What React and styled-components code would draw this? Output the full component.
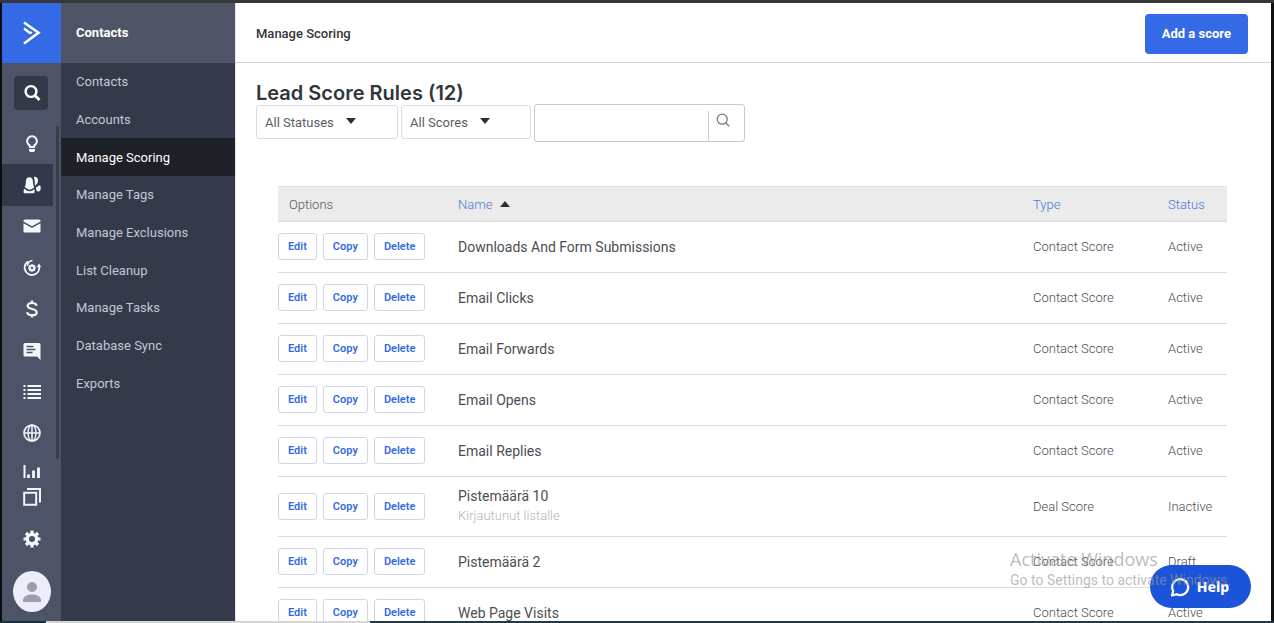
import React from "react";
import styled, { createGlobalStyle } from "styled-components";

const GlobalStyle = createGlobalStyle`
  *, *::before, *::after { box-sizing: border-box; }
  body {
    margin: 0;
    background: #fff;
    color: #32353b;
    font-family: "Roboto", "Inter", sans-serif;
    font-size: 13px;
  }
  button, input, select { font: inherit; color: inherit; }
  h1, h2, p, ul { margin: 0; padding: 0; }
  ul { list-style: none; }
  a { color: inherit; text-decoration: none; }
`;

const Screen = styled.div`
  position: relative;
  display: flex;
  flex-direction: column;
  height: 100vh;
  overflow: hidden;
  border-top: 3px solid #37363a;
`;

const Shell = styled.div`
  display: flex;
  flex: 1;
  min-height: 0;
  border-left: 2px solid #0b0c10;
  border-right: 3px solid #101113;
`;

const Taskbar = styled.div`
  display: flex;
  flex: none;
  height: 2px;
  background: #233744;
`;
const TaskbarStart = styled.span`
  width: 46px;
  background: #1c2d3d;
`;
const TaskbarSearch = styled.span`
  width: 324px;
  background: #d5d5d5;
`;

const Rail = styled.nav`
  position: relative;
  display: flex;
  flex: none;
  flex-direction: column;
  width: 59px;
  background: #4d5468;
  color: #f5f6fc;
`;
const Logo = styled.a`
  display: flex;
  flex: none;
  align-items: center;
  justify-content: center;
  height: 60px;
  background: #356ae6;
`;
const RailSearch = styled.button`
  display: flex;
  flex: none;
  align-items: center;
  justify-content: center;
  width: 34px;
  height: 34px;
  margin: 13px 12px;
  padding: 0 0 0 2px;
  border: 0;
  border-radius: 4px;
  background: #333949;
  color: #fff;
`;
const RailList = styled.ul`
  display: flex;
  flex: 1;
  flex-direction: column;
  min-height: 0;
`;
const RailItem = styled.li`
  display: flex;
  flex: 1;
  width: 51px;
  background: ${(p) => (p.$active ? "#333949" : "transparent")};
`;
const RailLink = styled.a`
  display: flex;
  flex: 1;
  align-items: center;
  justify-content: center;
  padding-left: 9px;
`;
const RailFoot = styled.a`
  display: flex;
  flex: none;
  align-items: flex-end;
  justify-content: center;
  height: ${(p) => p.$height}px;
`;
const RailThumb = styled.span`
  position: absolute;
  top: 123px;
  right: 2px;
  bottom: 162px;
  width: 3px;
  border-radius: 2px;
  background: #363c4c;
`;
const Avatar = styled.a`
  display: flex;
  flex: none;
  align-items: center;
  justify-content: center;
  width: 38px;
  height: 41px;
  margin: 23px 11px 9px;
  border-radius: 50%;
  background: #ebedf8;
  color: #9a9fb3;
`;

const Menu = styled.nav`
  flex: none;
  width: 174px;
  background: #343a4a;
  color: #c3c7d6;
`;
const MenuTitle = styled.h2`
  padding-left: 15px;
  background: #4f5567;
  color: #fff;
  font-size: 13px;
  font-weight: 700;
  line-height: 60px;
`;
const MenuList = styled.ul`
  display: grid;
  grid-auto-rows: 1fr;
  height: 339px;
`;
const MenuLink = styled.a`
  display: flex;
  align-items: center;
  height: 100%;
  padding-left: 15px;
  background: ${(p) => (p.$active ? "#1e2128" : "transparent")};
  color: ${(p) => (p.$active ? "#fff" : "inherit")};
`;

const Main = styled.main`
  flex: 1;
  min-width: 0;
  overflow: hidden;
  border-left: 1px solid #e3e4ea;
`;
const Header = styled.header`
  display: flex;
  align-items: center;
  justify-content: space-between;
  height: 60px;
  padding: 2px 23px 0 20px;
  border-bottom: 1px solid #cfd3e6;
`;
const Crumb = styled.p`
  font-weight: 500;
`;
const AddButton = styled.button`
  height: 40px;
  padding: 0 17px;
  border: 0;
  border-radius: 4px;
  background: #356ae6;
  color: #fff;
  font-weight: 700;
`;
const Title = styled.h1`
  padding: 20px 20px 0;
  font-family: "Inter", "Roboto", sans-serif;
  font-size: 20px;
  font-weight: 600;
  line-height: 21px;
`;
const Filters = styled.form`
  display: flex;
  align-items: flex-start;
  gap: 3px;
  padding: 0 20px;
`;
const SelectBox = styled.span`
  position: relative;
  display: flex;
  width: ${(p) => p.$width}px;
  height: 34px;
  margin-top: 1px;
`;
const Select = styled.select`
  width: 100%;
  padding: 0 8px;
  border: 1px solid #dadce3;
  border-radius: 3px;
  background: #fff;
  color: #5b5e66;
  appearance: none;
`;
const SelectArrow = styled.svg`
  position: absolute;
  top: 13px;
  left: ${(p) => p.$left}px;
  pointer-events: none;
`;
const SearchBox = styled.span`
  display: flex;
  align-items: flex-end;
  width: 211px;
  height: 38px;
  border: 1px solid #c9c9cb;
  border-radius: 3px;
`;
const SearchInput = styled.input`
  flex: 1;
  min-width: 0;
  height: 36px;
  padding: 0 8px;
  border: 0;
  outline: 0;
  background: transparent;
`;
const SearchButton = styled.button`
  display: flex;
  width: 36px;
  height: 30px;
  padding: 2px 0 0 7px;
  border: 0;
  border-left: 1px solid #cfcfd1;
  background: transparent;
  color: #77797d;
`;

const TableWrap = styled.div`
  padding: 44px 44px 0 42px;
`;
const Table = styled.table`
  width: 100%;
  border-collapse: separate;
  border-spacing: 0;
  table-layout: fixed;
`;
const HeadCell = styled.th`
  width: ${(p) => p.$width};
  height: 36px;
  padding: 0 0 0 ${(p) => p.$indent || 0}px;
  border-top: 1px solid #e2e2e2;
  border-bottom: 1px solid #d9d9d9;
  background: #ebebeb;
  color: #55575c;
  font-weight: 300;
  text-align: left;
`;
const SortLink = styled.a`
  display: inline-flex;
  align-items: center;
  gap: 8px;
  color: #4a78dc;
`;
const Cell = styled.td`
  height: ${(p) => (p.$tall ? 60 : 51)}px;
  padding: 0 0 1px;
  border-bottom: 1px solid #dcdcde;
  color: #4c4e53;
  font-weight: 300;
  white-space: nowrap;
`;
const Actions = styled.div`
  display: flex;
  gap: 6px;
`;
const RowButton = styled.button`
  height: 27px;
  padding: 0 9px;
  border: 1px solid #d0d5e6;
  border-radius: 3px;
  background: #fff;
  color: #356ae6;
  font-size: 11px;
  font-weight: 600;
`;
const RuleName = styled.p`
  color: #4c4e53;
  font-size: 14px;
  font-weight: 400;
  line-height: 20px;
`;
const RuleNote = styled.p`
  color: #b4b5b9;
  line-height: 20px;
`;

const HelpButton = styled.button`
  position: absolute;
  right: 23px;
  bottom: 15px;
  display: flex;
  align-items: center;
  justify-content: center;
  gap: 7px;
  width: 101px;
  height: 43px;
  padding: 0 2px 0 0;
  border: 0;
  border-radius: 22px;
  background: #1b54d9;
  color: #fff;
  font-family: "Noto Sans", sans-serif;
  font-size: 14px;
  font-weight: 800;
`;
const Watermark = styled.div`
  position: absolute;
  right: 43px;
  bottom: 34px;
  color: rgba(150, 150, 150, 0.65);
  font-size: 14px;
  line-height: 18px;
  pointer-events: none;
`;
const WatermarkTitle = styled.p`
  font-family: "Open Sans", "Noto Sans", sans-serif;
  font-size: 18px;
  line-height: 24px;
`;

const Icon = ({ size = 18, children }) => (
  <svg width={size} height={size} viewBox="0 0 18 18" fill="none" stroke="currentColor" strokeWidth="2" aria-hidden="true">
    {children}
  </svg>
);

const railItems = [
  ["Tips", <Icon><path d="M6.800 12v-1.500A4.900 4.900 0 1 1 11.200 10.500V12Z" /><path d="M6 14h6v1.200c0 1-.8 1.800-1.800 1.800H7.800C6.800 17 6 16.200 6 15.200Z" fill="currentColor" stroke="none" /></Icon>],
  ["Contacts", <Icon><g fill="currentColor" stroke="none"><path d="M6.400 1.200c2 0 3.100 1.200 3.400 3.200l.5 4.300c.1 1 .9 1.600 1 2.700-1 .2-1.700 1-2.500 1.600-1.600 1.200-3.300 1-4.700-.2-.8-.7-1.500-1.400-2.500-1.500.1-1 .9-1.600 1-2.600L3 4.400c.3-2 1.400-3.200 3.400-3.200Z" /><path d="M1 12.700c1 .1 1.500.8 2.300 1.500 2 1.500 4.600 1.500 6.600 0 .6-.5 1-.9 1.700-1V16a1.300 1.300 0 0 1-1.300 1.300H1.800A1.300 1.300 0 0 1 .5 16Z" /><path d="M10.800.9c2.500-.5 4 1 4.200 3.100.1 1.800-.2 3-1.200 4l-1.700 1.700c-.6-2.500-.1-6-1.300-8.800Z" /><path d="M13 11.500c1.500-.5 2.500-2.400 4.200-2.200.6 1.400.6 3.400.3 4.400-.4 1.200-1.300 1.800-2.400 1.800-1.600 0-2.200-1.700-2.100-4Z" /></g></Icon>],
  ["Campaigns", <Icon><path d="M1.500 2.500h15a1 1 0 0 1 1 1v1L9 9.300.5 4.500v-1a1 1 0 0 1 1-1ZM.5 6.200 9 11l8.500-4.800v8.300a1 1 0 0 1-1 1h-15a1 1 0 0 1-1-1Z" fill="currentColor" stroke="none" /></Icon>],
  ["Automations", <Icon><path d="M5 2.500A7.300 7.300 0 1 0 16.200 7.500" /><path d="M9.500 1.500C6 2 4.500 4 4.300 7" strokeWidth="1.700" /><path d="m13.500 8 2.700-3.500L18 8Z" fill="currentColor" stroke="none" /><circle cx="9" cy="9" r="2.300" strokeWidth="2.300" /><path d="M9 5v8M5 9h8M6.200 6.200l5.600 5.600M11.800 6.200l-5.600 5.600" strokeWidth="1" /><circle cx="9" cy="9" r="1.200" fill="#4d5468" stroke="none" /></Icon>],
  ["Deals", <Icon><path d="M13.600 5.700C13.300 3.900 11.600 3 9.100 3 6.500 3 4.700 4 4.700 5.800c0 2.100 2.100 2.700 4.400 3.200 2.500.5 4.600 1.200 4.600 3.400 0 1.800-1.900 2.800-4.600 2.800-2.800 0-4.700-1.100-4.900-3.100M9 .5v3M9 14.500v3" strokeWidth="2.200" /></Icon>],
  ["Conversations", <Icon><path d="M2 1h14a1.500 1.500 0 0 1 1.500 1.500V18L14 14.500H2A1.500 1.500 0 0 1 .5 13V2.500A1.500 1.500 0 0 1 2 1Z" fill="currentColor" stroke="none" /><path d="M3.500 4.500h7M3.500 7.500h9M3.500 10.500h6" stroke="#4d5468" strokeWidth="1.500" /></Icon>],
  ["Lists", <Icon><path d="M4.500 3h13.500M4.500 7h13.500M4.500 11h13.500M4.500 15h13.500M.5 3h2M.5 7h2M.5 11h2M.5 15h2" strokeWidth="2" /></Icon>],
  ["Website", <Icon><circle cx="9" cy="9" r="8" strokeWidth="1.600" /><ellipse cx="9" cy="9" rx="4" ry="8" strokeWidth="1.300" /><path d="M1 9h16M9 1v16" strokeWidth="1.500" /></Icon>],
];

const menuItems = [
  "Contacts", "Accounts", "Manage Scoring", "Manage Tags", "Manage Exclusions",
  "List Cleanup", "Manage Tasks", "Database Sync", "Exports",
];

const rules = [
  { name: "Downloads And Form Submissions", type: "Contact Score", status: "Active" },
  { name: "Email Clicks", type: "Contact Score", status: "Active" },
  { name: "Email Forwards", type: "Contact Score", status: "Active" },
  { name: "Email Opens", type: "Contact Score", status: "Active" },
  { name: "Email Replies", type: "Contact Score", status: "Active" },
  { name: "Pistemäärä 10", note: "Kirjautunut listalle", type: "Deal Score", status: "Inactive" },
  { name: "Pistemäärä 2", type: "Contact Score", status: "Draft" },
  { name: "Web Page Visits", type: "Contact Score", status: "Active" },
];

function Filter({ label, value, width, arrow }) {
  return (
    <SelectBox $width={width}>
      <Select aria-label={label} defaultValue={value}>
        <option>{value}</option>
      </Select>
      <SelectArrow $left={arrow} width="10" height="6" viewBox="0 0 10 6" aria-hidden="true">
        <path d="M0 0h10L5 6Z" fill="#2d2e31" />
      </SelectArrow>
    </SelectBox>
  );
}

function RuleRow({ rule }) {
  const tall = Boolean(rule.note);
  return (
    <tr>
      <Cell $tall={tall}>
        <Actions>
          <RowButton type="button">Edit</RowButton>
          <RowButton type="button">Copy</RowButton>
          <RowButton type="button">Delete</RowButton>
        </Actions>
      </Cell>
      <Cell $tall={tall}>
        <RuleName>{rule.name}</RuleName>
        {rule.note && <RuleNote>{rule.note}</RuleNote>}
      </Cell>
      <Cell $tall={tall}>{rule.type}</Cell>
      <Cell $tall={tall}>{rule.status}</Cell>
    </tr>
  );
}

export default function App() {
  return (
    <>
      <GlobalStyle />
      <Screen>
        <Shell>
          <Rail aria-label="Main">
            <Logo href="#" aria-label="Home">
              <svg width="18" height="24" viewBox="0 0 18 24" fill="none" stroke="#fff" strokeWidth="2.600" aria-hidden="true">
                <path d="M1 1.500 15.500 11.800 1 22.500" />
                <path d="M1 7.500 6.300 11.500Q7.500 12.300 9 11.200" strokeWidth="2.200" />
              </svg>
            </Logo>
            <RailSearch type="button" aria-label="Search">
              <Icon><circle cx="8" cy="7.500" r="5.400" strokeWidth="2.400" /><path d="m12 11.500 4.500 4.500" strokeWidth="2.800" /></Icon>
            </RailSearch>
            <RailList>
              {railItems.map(([name, icon]) => (
                <RailItem key={name} $active={name === "Contacts"}>
                  <RailLink href="#" aria-label={name}>{icon}</RailLink>
                </RailItem>
              ))}
            </RailList>
            <RailFoot href="#" aria-label="Reports" $height={24}>
              <svg width="18" height="13" viewBox="0 0 18 13" fill="none" stroke="currentColor" strokeWidth="2" aria-hidden="true">
                <path d="M1.500 0v13" /><path d="M5.500 9.500V13M10.500 5.500V13M15.500 2.500V13" strokeWidth="2.800" />
              </svg>
            </RailFoot>
            <RailFoot href="#" aria-label="Apps" $height={28}>
              <Icon><path d="M1.200 4.700h12v12h-12Z" /><path d="M4 1h13v13.500" /></Icon>
            </RailFoot>
            <RailFoot href="#" aria-label="Settings" $height={42}>
              <Icon><circle cx="9" cy="9" r="4.700" strokeWidth="3.300" /><path d="M9 .5v3M9 14.500v3M.5 9h3M14.500 9h3M3 3l2 2M13 13l2 2M15 3l-2 2M5 13l-2 2" strokeWidth="3.200" /></Icon>
            </RailFoot>
            <Avatar href="#" aria-label="Account">
              <svg width="20" height="22" viewBox="0 0 20 22" fill="currentColor" aria-hidden="true">
                <circle cx="10" cy="6" r="5" /><path d="M1 21v-2c0-3.500 4.500-5.500 9-5.500s9 2 9 5.500v2Z" />
              </svg>
            </Avatar>
            <RailThumb />
          </Rail>

          <Menu aria-label="Contacts">
            <MenuTitle>Contacts</MenuTitle>
            <MenuList>
              {menuItems.map((item) => (
                <li key={item}>
                  <MenuLink href="#" $active={item === "Manage Scoring"}>{item}</MenuLink>
                </li>
              ))}
            </MenuList>
          </Menu>

          <Main>
            <Header>
              <Crumb>Manage Scoring</Crumb>
              <AddButton type="button">Add a score</AddButton>
            </Header>
            <Title>Lead Score Rules (12)</Title>
            <Filters onSubmit={(e) => e.preventDefault()}>
              <Filter label="Status" value="All Statuses" width={142} arrow={90} />
              <Filter label="Score" value="All Scores" width={130} arrow={79} />
              <SearchBox>
                <SearchInput type="text" aria-label="Search rules" />
                <SearchButton type="submit" aria-label="Search">
                  <svg width="14" height="14" viewBox="0 0 14 14" fill="none" stroke="currentColor" strokeWidth="1.300" aria-hidden="true">
                    <circle cx="6.200" cy="6.200" r="5" /><path d="m9.800 9.800 3.400 3.400" />
                  </svg>
                </SearchButton>
              </SearchBox>
            </Filters>
            <TableWrap>
              <Table>
                <thead>
                  <tr>
                    <HeadCell scope="col" $width="180px" $indent={11}>Options</HeadCell>
                    <HeadCell scope="col" $width="auto">
                      <SortLink href="#">
                        Name
                        <svg width="10" height="6" viewBox="0 0 10 6" aria-hidden="true"><path d="M0 6h10L5 0Z" fill="#2d2e31" /></svg>
                      </SortLink>
                    </HeadCell>
                    <HeadCell scope="col" $width="135px"><SortLink href="#">Type</SortLink></HeadCell>
                    <HeadCell scope="col" $width="59px"><SortLink href="#">Status</SortLink></HeadCell>
                  </tr>
                </thead>
                <tbody>
                  {rules.map((rule) => <RuleRow key={rule.name} rule={rule} />)}
                </tbody>
              </Table>
            </TableWrap>
          </Main>
        </Shell>
        <Taskbar><TaskbarStart /><TaskbarSearch /></Taskbar>
        <HelpButton type="button">
          <svg width="20" height="20" viewBox="0 0 20 20" fill="none" stroke="currentColor" strokeWidth="2.200" strokeLinejoin="round" aria-hidden="true">
            <path d="M2 18.500 3.200 14A8 8 0 1 1 6.500 17.200Z" />
          </svg>
          Help
        </HelpButton>
        <Watermark>
          <WatermarkTitle>Activate Windows</WatermarkTitle>
          <p>Go to Settings to activate Windows.</p>
        </Watermark>
      </Screen>
    </>
  );
}
